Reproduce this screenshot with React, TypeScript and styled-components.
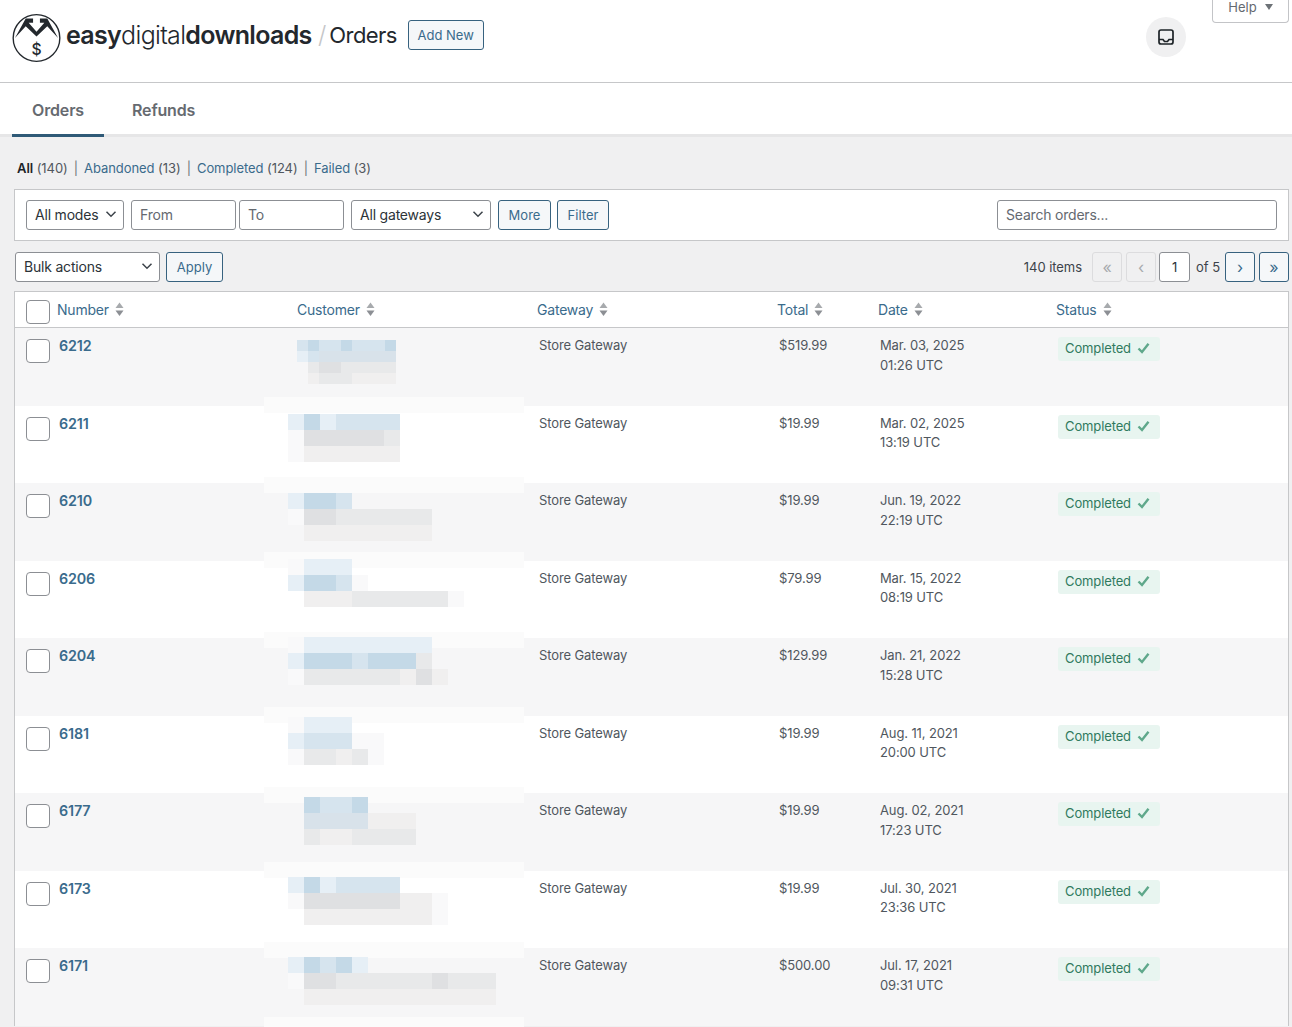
import styled, { createGlobalStyle } from 'styled-components';

const GlobalStyle = createGlobalStyle`
    html, body {
        margin: 0;
        padding: 0;
        background: #f0f0f1;
        font-family: Inter, "Liberation Sans", sans-serif;
        color: #3c434a;
    }
    * {
        box-sizing: border-box;
    }
`;

const Page = styled.div`
    width: 1292px;
    height: 1027px;
    overflow: hidden;
`;

const TopBar = styled.header`
    display: flex;
    align-items: flex-start;
    height: 83px;
    padding: 13px 3px 0 12px;
    background: #fff;
    border-bottom: 1px solid #c6c7c9;
`;
const Logo = styled.svg`
    width: 49px;
    height: 50px;
    flex: none;
`;
const Brand = styled.div`
    flex: none;
    width: 247px;
    margin: 6px 0 0 5px;
    font-size: 25px;
    line-height: 32px;
    letter-spacing: -0.68px;
    font-weight: 300;
    color: #23282d;
    white-space: nowrap;
    b {
        font-weight: 600;
    }
`;
const Slash = styled.span`
    margin: 6px 0 0 5px;
    font-size: 24px;
    line-height: 32px;
    font-weight: 300;
    color: #c5c6c8;
`;
const Title = styled.h1`
    margin: 6px 0 0 3px;
    font-size: 22px;
    line-height: 32px;
    font-weight: 400;
    letter-spacing: -0.6px;
    color: #23282d;
`;
const AddNew = styled.button`
    margin: 7px 0 0 11px;
    width: 76px;
    height: 30px;
    padding: 0;
    font: 400 13px Inter, sans-serif;
    color: #3a6b8c;
    background: #f5f7f9;
    border: 1px solid #37627f;
    border-radius: 3px;
`;
const RoundIcon = styled.div`
    display: flex;
    align-items: center;
    justify-content: center;
    width: 40px;
    height: 40px;
    margin: 4px 0 0 auto;
    border-radius: 50%;
    background: #f0f0f1;
`;
const Help = styled.div`
    display: flex;
    align-items: center;
    justify-content: center;
    gap: 8px;
    width: 77px;
    height: 23px;
    margin: -13px 0 0 26px;
    padding: 0 0 8px;
    font-size: 13px;
    color: #646970;
    background: #fff;
    border: 1px solid #c3c4c7;
    border-top: 0;
    border-radius: 0 0 4px 4px;
    &::after {
        content: '';
        border-left: 4.5px solid transparent;
        border-right: 4.5px solid transparent;
        border-top: 6px solid #6d7277;
    }
`;

const Tabs = styled.nav`
    display: flex;
    height: 54px;
    padding-left: 12px;
    background: #fff;
    border-bottom: 3px solid #e6e6e7;
`;
const Tab = styled.a<{ $active?: boolean }>`
    display: block;
    height: 54px;
    padding: 17px 20px 0;
    margin-right: 8px;
    font-size: 16px;
    line-height: 20px;
    font-weight: 600;
    letter-spacing: -0.15px;
    color: #666a70;
    border-bottom: 3px solid ${(p) => (p.$active ? '#2f5a77' : 'transparent')};
`;

const Content = styled.main`
    padding: 21px 3px 0 14px;
`;

const Views = styled.ul`
    display: flex;
    gap: 5px;
    margin: 0 0 11px;
    padding: 0 0 0 3px;
    list-style: none;
    font-size: 13px;
    line-height: 20px;
    letter-spacing: -0.06px;
    color: #50575e;
`;
const ViewLink = styled.a<{ $current?: boolean }>`
    color: ${(p) => (p.$current ? '#1d2327' : '#3a6b8c')};
    font-weight: ${(p) => (p.$current ? 600 : 400)};
`;
const Separator = styled.span`
    margin: 0 1px;
    color: #6f7378;
`;

const FilterBar = styled.div`
    display: flex;
    align-items: center;
    height: 52px;
    padding: 0 11px;
    background: #fff;
    border: 1px solid #c6c7c9;
`;
const Select = styled.div<{ $width: number; $gap?: number }>`
    display: flex;
    align-items: center;
    justify-content: space-between;
    flex: none;
    width: ${(p) => p.$width}px;
    height: 30px;
    margin-right: ${(p) => p.$gap ?? 7}px;
    padding: 0 6px 2px 8px;
    font-size: 14px;
    letter-spacing: -0.2px;
    color: #2c3338;
    background: #fff;
    border: 1px solid #8c8f94;
    border-radius: 3px;
`;
const Field = styled.div<{ $width: number; $gap?: number }>`
    display: flex;
    align-items: center;
    flex: none;
    width: ${(p) => p.$width}px;
    height: 30px;
    margin-right: ${(p) => p.$gap ?? 3}px;
    padding: 0 8px 2px;
    font-size: 14px;
    letter-spacing: -0.2px;
    color: #646970;
    background: #fff;
    border: 1px solid #8c8f94;
    border-radius: 3px;
`;
const Button = styled.button<{ $width: number; $gap?: number }>`
    flex: none;
    width: ${(p) => p.$width}px;
    height: 30px;
    margin-right: ${(p) => p.$gap ?? 6}px;
    padding: 0;
    font: 400 13px Inter, sans-serif;
    color: #3a6b8c;
    background: #f5f7f9;
    border: 1px solid #37627f;
    border-radius: 3px;
`;
const SearchBox = styled(Field)`
    width: 280px;
    margin: 0 0 0 auto;
`;

const ActionBar = styled.div`
    display: flex;
    align-items: flex-start;
    height: 50px;
    padding: 11px 0 0 1px;
    font-size: 13px;
    letter-spacing: -0.05px;
    color: #3c434a;
`;
const Pagination = styled.div`
    display: flex;
    align-items: center;
    margin-left: auto;
`;
const ItemCount = styled.span`
    margin-right: 10px;
`;
const PageButton = styled.span<{ $disabled?: boolean }>`
    display: flex;
    align-items: center;
    justify-content: center;
    width: 30px;
    height: 30px;
    margin-right: 4px;
    font-size: 16px;
    color: ${(p) => (p.$disabled ? '#a7aaad' : '#3a6b8c')};
    background: ${(p) => (p.$disabled ? '#f0f0f1' : '#f5f7f9')};
    border: 1px solid ${(p) => (p.$disabled ? '#dcdcde' : '#37627f')};
    border-radius: 3px;
    &:last-child {
        margin-right: 0;
    }
`;
const PrevButton = styled(PageButton)`
    margin-right: 3px;
`;
const PageInput = styled.span`
    display: flex;
    align-items: center;
    justify-content: center;
    width: 31px;
    height: 30px;
    font-size: 13px;
    color: #2c3338;
    background: #fff;
    border: 1px solid #8c8f94;
    border-radius: 3px;
`;
const PageTotal = styled.span`
    margin: 0 5px 0 6px;
`;

const Table = styled.section`
    background: #fff;
    border: 1px solid #c6c7c9;
    border-bottom: 0;
`;
const HeaderRow = styled.div`
    display: grid;
    grid-template-columns: 42px 240px 240px 240px 101px 178px 1fr;
    align-items: center;
    height: 36px;
    border-bottom: 1px solid #c6c7c9;
`;
const HeaderCell = styled.div`
    display: flex;
    align-items: center;
    gap: 6px;
    font-size: 14px;
    letter-spacing: -0.2px;
    color: #3a6b8c;
`;
const CheckCell = styled.div`
    padding-left: 11px;
`;
const Checkbox = styled.span<{ $top?: number }>`
    display: block;
    width: 24px;
    height: 24px;
    margin-top: ${(p) => p.$top ?? 0}px;
    background: #fff;
    border: 1px solid #8c8f94;
    border-radius: 4px;
`;
const Row = styled.div<{ $odd: boolean }>`
    display: grid;
    grid-template-columns: 42px 240px 240px 240px 101px 178px 1fr;
    grid-template-rows: 77.5px;
    height: 77.5px;
    background: ${(p) => (p.$odd ? '#f6f6f7' : '#fff')};
`;
const Cell = styled.div`
    padding: 8px 0 0 2px;
    font-size: 13px;
    line-height: 19.5px;
    letter-spacing: -0.12px;
    color: #50575e;
`;
const OrderNumber = styled.a`
    font-size: 14.3px;
    font-weight: 600;
    line-height: 20px;
    color: #3a6b8c;
`;
// the pixelated customer area bleeds a pale band over the neighbouring rows
const CustomerCell = styled(Cell)<{ $odd: boolean; $first: boolean }>`
    position: relative;
    height: 77.5px;
    padding: 0;
    ${(p) =>
        p.$odd &&
        `
        &::before, &::after {
            content: '';
            position: absolute;
            left: -33px;
            width: 260px;
            height: 16px;
            background: #fbfbfb;
        }
        &::before {
            top: -6px;
            display: ${p.$first ? 'none' : 'block'};
        }
        &::after {
            bottom: -7px;
        }
    `}
`;
const Blurred = styled.div<{ $top: number; $left: number }>`
    position: absolute;
    z-index: 1;
    top: ${(p) => p.$top}px;
    left: ${(p) => p.$left}px;
`;
const BlurLine = styled.div<{ $size: number }>`
    display: flex;
    height: ${(p) => p.$size}px;
`;
const BlurCell = styled.span<{ $c: string; $size: number }>`
    width: ${(p) => p.$size}px;
    height: ${(p) => p.$size}px;
    background: ${(p) => p.$c};
`;
const StatusCell = styled(Cell)`
    padding-top: 9px;
`;
const Badge = styled.span`
    display: inline-flex;
    align-items: center;
    gap: 6px;
    height: 24px;
    padding: 0 10px 0 7px;
    font-size: 13px;
    color: #2f7a5e;
    background: #e8f5f0;
    border-radius: 3px;
`;

const SortArrows = () => (
    <svg width="9" height="15" viewBox="0 0 9 15">
        <path d="M4.5 0.5 L8.5 6 L0.5 6 Z" fill="#a7aaad" />
        <path d="M4.5 14 L8.5 8.5 L0.5 8.5 Z" fill="#8c8f94" />
    </svg>
);

const Chevron = () => (
    <svg width="12" height="12" viewBox="0 0 12 12" fill="none" stroke="#3c434a" strokeWidth="1.5">
        <path d="M1.5 3.8 L6 8.2 L10.5 3.8" />
    </svg>
);

const Tick = () => (
    <svg width="13" height="12" viewBox="0 0 13 12" fill="none" stroke="#5fa88b" strokeWidth="2.4">
        <path d="M1.5 5.5 L5 9 L11.5 0.8" />
    </svg>
);

const b1 = '#c4d9e7';
const b2 = '#d6e4ee';
const b3 = '#e6eff6';
const bg = '#d8e2ea';
const g1 = '#dfe0e2';
const g2 = '#e8e9ea';
const g3 = '#f0efef';
const w1 = '#f9f9fa';
const __ = 'transparent';

// customer names are pixelated in the screenshot
const blur: { top: number; left: number; size: number; lines: string[][] }[] = [
    {
        top: 12,
        left: 0,
        size: 11,
        lines: [
            [b2, b1, b2, b2, b1, b2, b2, b2, b1],
            [b3, b2, bg, bg, bg, bg, bg, bg, bg],
            [__, g2, g1, g1, g2, g2, g2, g2, g2],
            [__, g3, g2, g2, g2, g3, g3, g3, g3],
        ],
    },
    {
        top: 8,
        left: -9,
        size: 16,
        lines: [
            [b3, b1, b3, b2, b2, b2, b2],
            [w1, g1, g1, g1, g1, g1, g2],
            [w1, g3, g3, g3, g3, g3, g3],
        ],
    },
    {
        top: 10,
        left: -9,
        size: 16,
        lines: [
            [b3, b1, b1, b2],
            [w1, g1, g1, g2, g2, g2, g2, g2, g2],
            [__, g3, g3, g3, g3, g3, g3, g3, g3],
        ],
    },
    {
        top: -2,
        left: -9,
        size: 16,
        lines: [
            [w1, b3, b3, b3],
            [b3, b1, b1, b2, w1],
            [__, g3, g3, g3, g2, g2, g2, g2, g2, g2, w1],
        ],
    },
    {
        top: -1,
        left: -9,
        size: 16,
        lines: [
            [w1, b3, b3, b3, b3, b3, b3, b3, b3],
            [b3, b1, b1, b1, b2, b1, b1, b1, g2],
            [w1, g2, g2, g2, g2, g2, g2, g3, g1, g3],
        ],
    },
    {
        top: 1,
        left: -9,
        size: 16,
        lines: [
            [w1, b3, b3, b3],
            [b3, b2, b2, b2, w1, w1],
            [w1, g2, g2, g3, g2, w1],
        ],
    },
    {
        top: 4,
        left: -9,
        size: 16,
        lines: [
            [__, b1, b2, b2, b1],
            [__, bg, bg, bg, bg, g3, g3, g3],
            [__, g2, g3, g3, g2, g2, g2, g2],
        ],
    },
    {
        top: 6,
        left: -9,
        size: 16,
        lines: [
            [b3, b1, b3, b2, b2, b2, b2],
            [w1, g1, g1, g1, g1, g1, g1, g3, g3, w1],
            [__, g3, g3, g3, g3, g3, g3, g3, g3, w1],
        ],
    },
    {
        top: 9,
        left: -9,
        size: 16,
        lines: [
            [b3, b1, b2, b1, b3],
            [w1, g1, g1, g2, g2, g2, g2, g2, g2, g1, g2, g2, g2],
            [__, g3, g3, g3, g3, g3, g3, g3, g3, g3, g3, g3, g3],
        ],
    },
];

const orders = [
    { id: '6212', total: '$519.99', date: 'Mar. 03, 2025', time: '01:26 UTC' },
    { id: '6211', total: '$19.99', date: 'Mar. 02, 2025', time: '13:19 UTC' },
    { id: '6210', total: '$19.99', date: 'Jun. 19, 2022', time: '22:19 UTC' },
    { id: '6206', total: '$79.99', date: 'Mar. 15, 2022', time: '08:19 UTC' },
    { id: '6204', total: '$129.99', date: 'Jan. 21, 2022', time: '15:28 UTC' },
    { id: '6181', total: '$19.99', date: 'Aug. 11, 2021', time: '20:00 UTC' },
    { id: '6177', total: '$19.99', date: 'Aug. 02, 2021', time: '17:23 UTC' },
    { id: '6173', total: '$19.99', date: 'Jul. 30, 2021', time: '23:36 UTC' },
    { id: '6171', total: '$500.00', date: 'Jul. 17, 2021', time: '09:31 UTC' },
];

const columns = ['Number', 'Customer', 'Gateway', 'Total', 'Date', 'Status'];

export default function App() {
    return (
        <Page>
            <GlobalStyle />
            <TopBar>
                <Logo viewBox="0 0 50 50">
                    <circle cx="25" cy="25" r="24" fill="#fff" />
                    <path d="M3 25 L14 5 L36 5 L47 25 L36 13 L25 23.5 L14 13 Z" fill="#23282d" />
                    <path d="M21.5 0 H28.5 V9.5 H33 L25 18.5 L17 9.5 H21.5 Z" fill="#fff" />
                    <circle cx="25" cy="25" r="23.8" fill="none" stroke="#23282d" strokeWidth="1.4" />
                    <text
                        x="25"
                        y="42"
                        textAnchor="middle"
                        fontFamily="Inter, sans-serif"
                        fontSize="16"
                        fontWeight="500"
                        fill="#23282d"
                    >
                        $
                    </text>
                </Logo>
                <Brand>
                    <b>easy</b>digital<b>downloads</b>
                </Brand>
                <Slash>/</Slash>
                <Title>Orders</Title>
                <AddNew>Add New</AddNew>
                <RoundIcon>
                    <svg width="16" height="16" viewBox="0 0 16 16" fill="none" stroke="#1d2327" strokeWidth="1.7">
                        <rect x="1" y="1" width="14" height="14" rx="2" />
                        <path d="M1 10.5 H5 L6.5 12.5 H9.5 L11 10.5 H15" />
                    </svg>
                </RoundIcon>
                <Help>Help</Help>
            </TopBar>
            <Tabs>
                <Tab $active>Orders</Tab>
                <Tab>Refunds</Tab>
            </Tabs>
            <Content>
                <Views>
                    <li>
                        <ViewLink $current>All</ViewLink> (140)
                    </li>
                    <Separator>|</Separator>
                    <li>
                        <ViewLink>Abandoned</ViewLink> (13)
                    </li>
                    <Separator>|</Separator>
                    <li>
                        <ViewLink>Completed</ViewLink> (124)
                    </li>
                    <Separator>|</Separator>
                    <li>
                        <ViewLink>Failed</ViewLink> (3)
                    </li>
                </Views>
                <FilterBar>
                    <Select $width={98}>
                        All modes <Chevron />
                    </Select>
                    <Field $width={105}>From</Field>
                    <Field $width={105} $gap={7}>
                        To
                    </Field>
                    <Select $width={140}>
                        All gateways <Chevron />
                    </Select>
                    <Button $width={53}>More</Button>
                    <Button $width={52}>Filter</Button>
                    <SearchBox $width={280}>Search orders...</SearchBox>
                </FilterBar>
                <ActionBar>
                    <Select $width={145} $gap={6}>
                        Bulk actions <Chevron />
                    </Select>
                    <Button $width={57}>Apply</Button>
                    <Pagination>
                        <ItemCount>140 items</ItemCount>
                        <PageButton $disabled>«</PageButton>
                        <PrevButton $disabled>‹</PrevButton>
                        <PageInput>1</PageInput>
                        <PageTotal>of 5</PageTotal>
                        <PageButton>›</PageButton>
                        <PageButton>»</PageButton>
                    </Pagination>
                </ActionBar>
                <Table>
                    <HeaderRow>
                        <CheckCell>
                            <Checkbox $top={4} />
                        </CheckCell>
                        {columns.map((c) => (
                            <HeaderCell key={c}>
                                {c} <SortArrows />
                            </HeaderCell>
                        ))}
                    </HeaderRow>
                    {orders.map((o, i) => (
                        <Row key={o.id} $odd={i % 2 === 0}>
                            <CheckCell>
                                <Checkbox $top={11} />
                            </CheckCell>
                            <Cell>
                                <OrderNumber>{o.id}</OrderNumber>
                            </Cell>
                            <CustomerCell $odd={i % 2 === 0} $first={i === 0}>
                                <Blurred $top={blur[i].top} $left={blur[i].left}>
                                    {blur[i].lines.map((line, l) => (
                                        <BlurLine key={l} $size={blur[i].size}>
                                            {line.map((c, k) => (
                                                <BlurCell key={k} $c={c} $size={blur[i].size} />
                                            ))}
                                        </BlurLine>
                                    ))}
                                </Blurred>
                            </CustomerCell>
                            <Cell>Store Gateway</Cell>
                            <Cell>{o.total}</Cell>
                            <Cell>
                                {o.date}
                                <br />
                                {o.time}
                            </Cell>
                            <StatusCell>
                                <Badge>
                                    Completed <Tick />
                                </Badge>
                            </StatusCell>
                            <Cell />
                        </Row>
                    ))}
                </Table>
            </Content>
        </Page>
    );
}
